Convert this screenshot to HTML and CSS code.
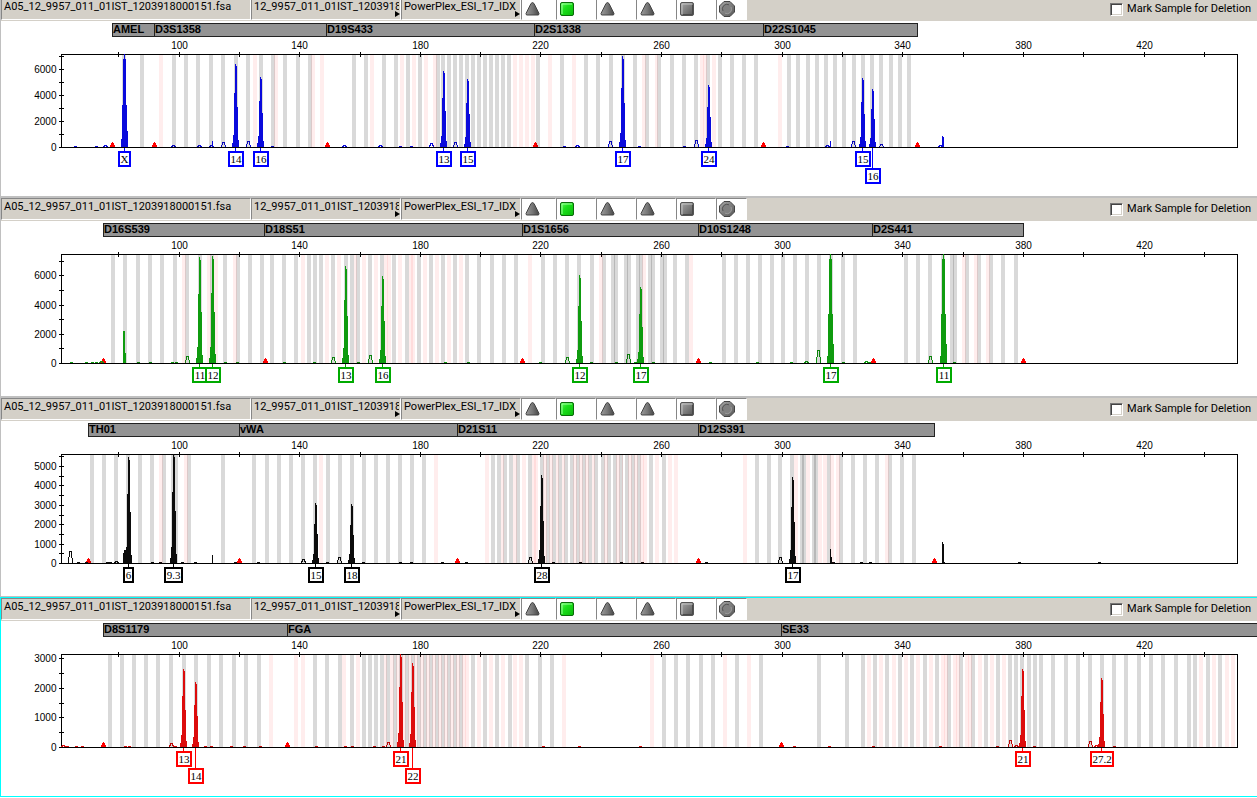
FILE: index.html
```html
<!DOCTYPE html>
<html lang="en">
<head>
<meta charset="utf-8">
<title>Samples Plot</title>
<link rel="stylesheet" href="styles.css">
</head>
<body>
<svg class="defs" width="0" height="0" aria-hidden="true">
  <defs>
    <linearGradient id="grey" x1="0" y1="0" x2="1" y2="1"><stop offset="0" stop-color="#a8a8a8"/><stop offset="1" stop-color="#555"/></linearGradient>
    <linearGradient id="cone" x1="0" y1="0" x2="1" y2="0"><stop offset="0" stop-color="#999"/><stop offset=".5" stop-color="#777"/><stop offset="1" stop-color="#484848"/></linearGradient>
    <linearGradient id="green" x1="0" y1="0" x2="1" y2="1"><stop offset="0" stop-color="#5cff5c"/><stop offset=".4" stop-color="#1be01b"/><stop offset="1" stop-color="#08b808"/></linearGradient>
    <symbol id="tri" viewBox="0 0 16 16"><path d="M7.500 1.500L9 2.500L14 12.500L13.500 14H1.500L1 12.500L6 2.500Z" fill="url(#cone)" stroke="#444"/></symbol>
    <symbol id="ok" viewBox="0 0 16 16"><rect x="0.5" y="1.5" width="13" height="13" rx="1.5" fill="url(#green)" stroke="#0a6a0a"/><path d="M2 13V3H12" fill="none" stroke="#9dff9d"/></symbol>
    <symbol id="sq" viewBox="0 0 16 16"><rect x="0.5" y="1.5" width="13" height="13" rx="1.5" fill="url(#grey)" stroke="#555"/><path d="M2 13V3H12" fill="none" stroke="#c4c4c4"/><path d="M3 13.500H12.500V4" fill="none" stroke="#4a4a4a"/></symbol>
    <symbol id="oct" viewBox="0 0 16 16"><path d="M5 .5H11L15.500 5V11L11 15.500H5L.5 11V5Z" fill="url(#grey)" stroke="#444"/><circle cx="8" cy="8" r="5" fill="#808080"/><path d="M4 10A4.500 4.500 0 0 1 10 3.800" fill="none" stroke="#555"/><path d="M12 6A4.500 4.500 0 0 1 6 12.200" fill="none" stroke="#999"/></symbol>
  </defs>
</svg>
<main class="panes" id="panes"></main>
<template id="pane">
  <section class="pane">
    <header class="toolbar">
      <div class="cell file">A05_12_9957_011_01IST_1203918000151.fsa</div>
      <div class="cell sample more"><span>12_9957_011_01IST_1203918</span></div>
      <div class="cell panel more"><span>PowerPlex_ESI_17_IDX</span></div>
      <div class="cell flag first"><svg class="icon"><use href="#tri"/></svg></div>
      <div class="cell flag"><svg class="icon"><use href="#ok"/></svg></div>
      <div class="cell flag"><svg class="icon"><use href="#tri"/></svg></div>
      <div class="cell flag"><svg class="icon"><use href="#tri"/></svg></div>
      <div class="cell flag"><svg class="icon"><use href="#sq"/></svg></div>
      <div class="cell flag last"><svg class="icon"><use href="#oct"/></svg></div>
      <label class="mark"><input type="checkbox">Mark Sample for Deletion</label>
    </header>
    <svg class="chart"></svg>
  </section>
</template>
<script src="plot.js"></script>
</body>
</html>
```
FILE: styles.css
```css
body {
  margin: 0;
  background: #fff;
  font-family: "Liberation Sans", Arial, sans-serif;
  font-size: 11px;
  color: #000;
  overflow-x: hidden;
}

.defs {
  position: absolute;
}

.panes {
  display: flex;
  flex-direction: column;
  margin-top: -4px;
}

.pane {
  border-top: 2px solid #c0c0c0;
  border-left: 1px solid #c0c0c0;
}

.pane.selected {
  margin-top: 1px;
  border: 1px solid #0ff;
  border-right: 0;
  box-shadow: 0 -1px #c0c0c0;
}

.toolbar {
  display: flex;
  align-items: flex-start;
  height: 23px;
  background: #d4d0c8;
}

.cell {
  position: relative;
  box-sizing: border-box;
  height: 22px;
  border: 1px solid #fff;
  border-top-color: #868686;
  border-left-color: #868686;
  padding-left: 2px;
  font-family: Roboto, sans-serif;
  line-height: 15px;
  white-space: nowrap;
  flex: none;
}

.cell span {
  display: block;
  overflow: hidden;
}

.file {
  width: 250px;
}

.sample {
  width: 150px;
}

.panel {
  width: 120px;
}

.more {
  padding-right: 1px;
}

.more::after {
  content: "";
  position: absolute;
  right: 0;
  bottom: 2px;
  border: 3px solid transparent;
  border-left: 5px solid #000;
  border-right: 0;
}

.flag {
  width: 40px;
  background: #fff;
  padding: 2px 3px;
}

.first {
  width: 35px;
}

.last {
  width: 31px;
  padding-left: 2px;
}

.icon {
  display: block;
  width: 16px;
  height: 16px;
}

.mark {
  display: flex;
  align-items: center;
  gap: 4px;
  margin-left: auto;
  padding: 4px 6px 0 0;
  font-family: Roboto, sans-serif;
  line-height: 14px;
  white-space: nowrap;
}

.mark input {
  appearance: none;
  box-sizing: border-box;
  width: 13px;
  height: 13px;
  margin: 0;
  background: #fff;
  border: 1px solid #fff;
  border-top-color: #777;
  border-left-color: #777;
  box-shadow: inset 1px 1px #444, inset -1px -1px #d4d0c8;
}

.mark input:checked {
  background: #444;
}

.chart {
  display: block;
  width: 100%;
  height: 175px;
  overflow: hidden;
  shape-rendering: crispEdges;
}

.marker {
  fill: #939393;
  stroke: #222;
}

.marker-name {
  font-weight: bold;
  font-size: 11px;
}

.scale {
  font-size: 10px;
}

.x-scale {
  text-anchor: middle;
}

.y-scale {
  text-anchor: end;
}

.axis {
  fill: none;
  stroke: #000;
}

.bin {
  fill: #000;
  fill-opacity: 0.15;
}

.off-bin {
  fill: #f00;
  fill-opacity: 0.07;
}

.edge {
  fill: #f00;
}

.peak {
  fill: var(--trace);
}

.noise {
  fill: none;
  stroke: var(--trace);
}

.stem {
  stroke: var(--label);
}

.allele {
  fill: #fff;
  stroke: var(--label);
  stroke-width: 2;
}

.allele-name {
  font-family: "Liberation Serif", "Times New Roman", serif;
  font-size: 11px;
  text-anchor: middle;
}

.blue {
  --trace: #0a0adc;
  --label: #00f;
}

.green {
  --trace: #0f9b0f;
  --label: #00aa00;
}

.black {
  --trace: #0c0c0c;
  --label: #000;
}

.red {
  --trace: #dc0c0c;
  --label: #f00;
}
```
FILE: plot.js
```js
// Horizontal positions are in units of a 1257-wide plot and scale with the pane.
const BASE_WIDTH = 1257;
const TOP = 33.5;

const dyes = [
  {
    dye: "blue", base: 126.5, step: 13, ticks: 7, unit: 1000, every: 2,
    markers: [["AMEL", 112], ["D3S1358", 154], ["D19S433", 326], ["D2S1338", 534], ["D22S1045", 763]], end: 917,
    bins: [122,140,172,184,196,209,221,234,246,259,271,283,296,308,352,364,382,394,406,418,436,441,447,453,459,465,471,477,483,489,495,501,507,536,560,584,596,609,621,633,645,657,670,682,694,706,718,730,742,754,787,796,806,815,824,833,842,852,861,870,879,889,898,907],
    off: [159,253,274,311,320,370,400,412,424,433,513,519,525,531,548,572,642,655,700,703,712,778],
    peaks: [[124,93,"X",13,0,1],[235,83,"14"],[260,70,"16"],[443,76,"13"],[467,68,"15"],[622,91,"17"],[708,62,"24"],[862,69,"15"],[872,58,"16",16,1]],
    noise: [[75,1],[96,1],[105,2],[173,2],[199,2],[211,2],[223,5],[248,6],[272,1],[344,2],[380,2],[400,1],[411,1],[431,4],[455,5],[564,1],[577,2],[610,6],[639,1],[684,1],[696,7],[787,1],[827,2],[853,6],[881,3],[940,2]],
    spikes: [[121,8],[212,6],[830,6],[942,11],[943,10]],
    edges: [112,154,327,535,763,917]
  },
  {
    dye: "green", base: 142.5, step: 14.6, ticks: 7, unit: 1000, every: 2,
    markers: [["D16S539", 103], ["D18S51", 264], ["D1S1656", 522], ["D10S1248", 698], ["D2S441", 872]], end: 1023,
    bins: [111,123,136,148,160,173,185,198,210,223,236,248,260,270,282,294,307,313,319,331,344,350,356,368,380,392,405,417,429,441,453,465,477,490,502,514,541,553,565,577,590,602,611,614,624,627,636,639,648,651,660,663,673,685,722,734,746,758,770,781,793,805,817,829,841,853,904,916,928,941,950,953,965,977,989,1001,1014],
    off: [182,207,214,233,301,325,337,354,362,374,384,387,398,409,411,423,435,447,459,528,599,642,689,962,974,986],
    peaks: [[199,106,"11"],[212,107,"12"],[345,97,"13"],[382,87,"16"],[579,88,"12"],[640,76,"17"],[830,109,"17",16,0,1],[943,109,"11",16,0,1]],
    noise: [[71,1],[86,1],[92,1],[96,1],[101,2],[138,1],[150,1],[172,1],[176,1],[187,7],[225,1],[237,1],[284,1],[314,1],[333,6],[358,1],[370,8],[445,1],[468,1],[540,1],[567,6],[591,1],[616,1],[628,9],[635,1],[653,1],[710,1],[757,1],[791,1],[806,2],[818,13],[843,1],[866,2],[869,1],[930,7],[954,1]],
    spikes: [[123,32],[124,32],[125,10]],
    edges: [103,265,522,698,873,1023]
  },
  {
    dye: "black", base: 142.5, step: 9.7, ticks: 11, unit: 500, every: 2,
    markers: [["TH01", 88], ["vWA", 239], ["D21S11", 457], ["D12S391", 698]], end: 934,
    bins: [90,102,114,126,138,150,162,171,174,187,221,252,265,277,289,301,313,326,338,350,362,374,386,398,410,422,491,497,503,509,516,528,540,546,552,558,564,570,576,582,588,594,601,607,613,619,625,631,637,649,662,755,767,778,790,800,802,812,814,827,839,851,863,875,888,900,912],
    off: [159,184,319,434,485,501,513,522,532,534,543,549,556,562,573,579,585,592,604,616,619,628,634,640,643,655,668,674,743,794,806,818,823,830,836,885],
    peaks: [[128,106,"6",11],[173,109,"9.3",19],[315,60,"15"],[351,59,"18"],[541,88,"28"],[792,86,"17"]],
    noise: [[70,12],[78,1],[86,1],[107,1],[110,1],[116,2],[152,1],[160,1],[182,1],[195,1],[235,1],[258,1],[303,4],[327,1],[339,6],[363,1],[400,1],[411,1],[442,1],[466,1],[530,6],[553,1],[580,1],[621,1],[642,1],[706,1],[780,6],[833,1],[861,1],[870,1],[943,1],[1019,1],[1099,1]],
    spikes: [[123,10],[124,13],[125,13],[212,8],[830,14],[831,6],[942,21],[943,19]],
    edges: [88,239,457,698,934]
  },
  {
    dye: "red", base: 126.5, step: 14.8, ticks: 6, unit: 500, every: 2, selected: true,
    markers: [["D8S1179", 103], ["FGA", 287], ["SE33", 781]], end: 1300,
    bins: [108,120,132,144,156,169,182,194,207,219,232,244,257,313,325,338,350,362,368,374,380,386,393,399,405,411,417,423,429,435,441,447,453,459,471,483,495,508,525,538,550,662,674,686,699,711,735,759,817,845,861,873,885,898,910,923,935,947,959,971,984,996,1008,1014,1020,1027,1033,1039,1051,1064,1076,1088,1100,1112,1124,1137,1149,1161,1174,1187,1193,1206,1218],
    off: [269,294,301,342,356,384,390,396,402,408,414,420,426,432,438,444,450,456,462,465,477,489,501,513,519,562,650,723,747,867,879,892,904,916,929,941,944,953,956,965,968,978,990,1002,1199,1212,1225,1231],
    peaks: [[183,78,"13"],[195,65,"14",16,1],[400,93,"21"],[412,84,"22",16,1],[1022,78,"21"],[1101,69,"27.2",24]],
    noise: [[63,2],[67,1],[76,1],[82,1],[125,1],[129,1],[171,4],[175,1],[205,1],[211,1],[231,1],[244,1],[260,1],[316,1],[345,1],[352,1],[374,1],[383,1],[388,5],[543,1],[579,1],[640,1],[794,1],[829,1],[873,1],[940,1],[997,1],[1010,7],[1016,2],[1034,1],[1090,6],[1096,2],[1114,1]],
    spikes: [],
    edges: [103,287,781]
  }
];

// Size ticks, every 20 bases from 80 to 440.
const SIZE_TICKS = [118,179,239,299,360,420,480,540,601,661,721,782,842,902,963,1023,1083,1144,1204];

// Relative height of each one-pixel column from three left of the apex.
const PROFILE = [0.05, 0.15, 0.65, 1, 0.97, 0.48, 0.08];
const WIDE_PROFILE = [0.06, 0.45, 0.95, 1, 0.95, 0.45, 0.17];

// Off-ladder bins keep at most one pixel in common with a regular bin.
function offBinSpan(x, bins) {
  let from = x, to = x + 4;
  bins.forEach(b => {
    if (b > x && b < x + 4) to = Math.min(to, b + 1);
    if (b <= x && b + 4 > x) from = Math.max(from, b + 3);
  });
  return [from, Math.max(1, to - from)];
}

function draw(d, svg) {
  const k = (svg.clientWidth + 1) / BASE_WIDTH;
  // The pane's left border takes the first pixel column.
  const X = v => Math.round(v * k) - 1;
  const out = [];
  const line = (a, b, c, e, cls) => out.push(`<path class="${cls}" d="M${a} ${b}L${c} ${e}"/>`);
  const text = (x, y, cls, s) => out.push(`<text x="${x}" y="${y}" class="${cls}">${s}</text>`);
  const left = X(61) + 0.5, right = X(1237) + 0.5;

  d.markers.forEach(([name, x], i) => {
    const a = X(x), b = X(i + 1 < d.markers.length ? d.markers[i + 1][1] : d.end);
    out.push(`<rect class="marker" x="${a + 0.5}" y="2.5" width="${b - a}" height="13"/>`);
    text(a + 1, 12, "marker-name", name);
  });

  out.push(`<rect class="axis" x="${left}" y="${TOP}" width="${right - left}" height="${d.base - TOP}"/>`);
  SIZE_TICKS.forEach((v, i) => {
    const x = X(v) + 0.5;
    line(x, TOP - 2.5, x, TOP + 2.5, "axis");
    if (i % 2) text(x, 28, "scale x-scale", 80 + i * 20);
  });
  for (let i = 0; i <= d.ticks; i++) {
    const y = Math.round(d.base - 0.5 - i * d.step) + 0.5;
    line(left - 2.5, y, left + 2.5, y, "axis");
    if (i % d.every === 0) text(left - 5, y + 3.5, "scale y-scale", i * d.unit);
  }

  d.edges.forEach(x => {
    const a = X(x), b = d.base - 0.5;
    out.push(`<path class="edge" d="M${a - 2} ${b}v-2h1v-2h1v-1h1v1h1v2h1v2z"/>`);
  });

  d.noise.forEach(([x, h]) => {
    const a = X(x), b = d.base;
    out.push(`<path class="noise" d="M${a - 1.5} ${b}L${a - 0.5} ${b - h}h2L${a + 2.5} ${b}"/>`);
  });

  const height = d.base - TOP - 1;
  d.bins.forEach(x => out.push(`<rect class="bin" x="${X(x)}" y="${TOP + 0.5}" width="4" height="${height}"/>`));
  const bins = d.bins.map(X);
  d.off.forEach(x => {
    const [from, width] = offBinSpan(X(x), bins);
    out.push(`<rect class="off-bin" x="${from}" y="${TOP + 0.5}" width="${width}" height="${height}"/>`);
  });

  const floor = d.base - 0.5;
  d.spikes.forEach(([x, h]) => out.push(`<rect class="peak" x="${X(x)}" y="${floor - h}" width="1" height="${h}"/>`));
  d.peaks.forEach(([x, h, , , , wide]) => {
    let path = `M${X(x) - 3} ${floor}`;
    (wide ? WIDE_PROFILE : PROFILE).forEach(f => { path += `V${floor - Math.round(h * f)}h1`; });
    out.push(`<path class="peak" d="${path}V${floor}z"/>`);
  });
  line(left, d.base, right, d.base, "axis");

  d.peaks.forEach(([x, , name, w = 16, row = 0]) => {
    const c = X(x), y = d.base + 3.5 + row * 17;
    line(c + 0.5, d.base, c + 0.5, y, "stem");
    const a = c + 1 - Math.ceil(w / 2);
    out.push(`<rect class="allele" x="${a + 1}" y="${y + 1}" width="${w - 2}" height="14"/>`);
    text(a + w / 2, y + 12, "allele-name", name);
  });

  svg.innerHTML = out.join("");
}

const host = document.getElementById("panes");
const template = document.getElementById("pane");
const charts = dyes.map(d => {
  const pane = template.content.firstElementChild.cloneNode(true);
  if (d.selected) pane.classList.add("selected");
  pane.classList.add(d.dye);
  host.append(pane);
  return [d, pane.querySelector(".chart")];
});
const drawAll = () => charts.forEach(([d, svg]) => draw(d, svg));
drawAll();
window.addEventListener("resize", drawAll);
```
